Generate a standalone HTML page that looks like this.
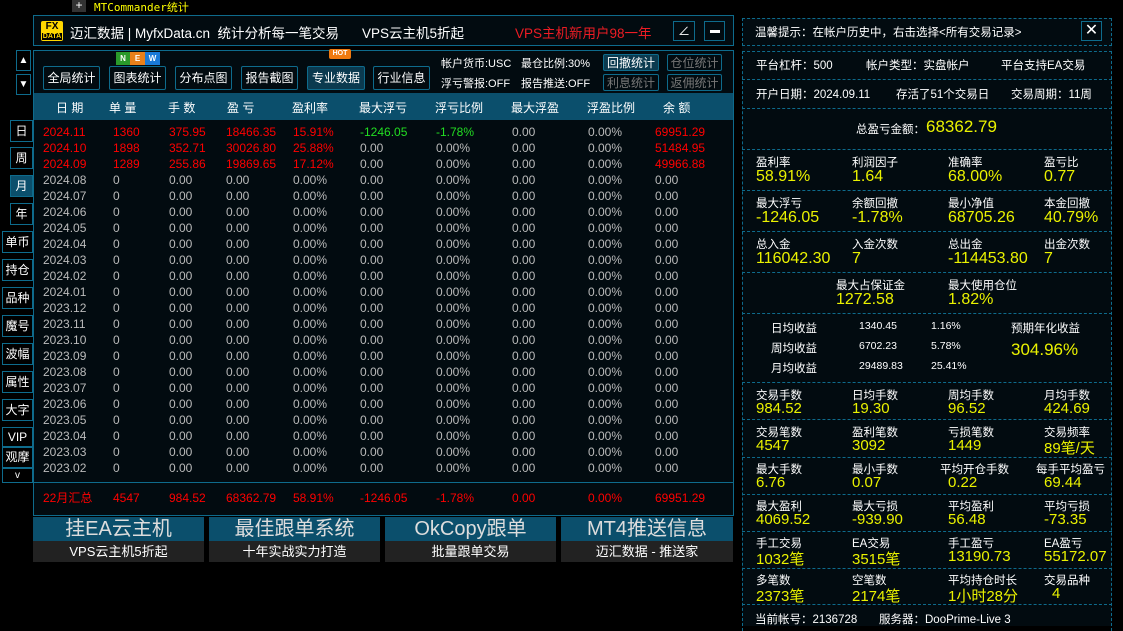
<!DOCTYPE html>
<html><head><meta charset="utf-8"><style>
*{margin:0;padding:0;box-sizing:border-box}
body{width:1123px;height:626px;background:#000;position:relative;overflow:hidden;font-family:"Liberation Sans","Noto Sans CJK SC",sans-serif;color:#ddd;font-size:12px}
.a{position:absolute;white-space:nowrap}
.bx{position:absolute;border:1px solid #0e6b8c}
.btn{position:absolute;border:1px solid #0e6b8c;border-radius:2px;background:#020b10;color:#fff;font-size:12px;text-align:center;line-height:23px}
.sb{position:absolute;border:1px solid #0e6b8c;border-radius:2px;color:#777;font-size:12px;text-align:center;line-height:16px}
.side{position:absolute;border:1px solid #0e6b8c;background:#000;color:#fff;font-size:12px;text-align:center}
table{position:absolute;left:43px;border-collapse:collapse;font-size:12px}
td{height:16px;padding:0;line-height:16px;white-space:nowrap;color:#bbb}
tr.r td{color:#f00}
.rp{position:absolute;left:742px;width:370px;border:1px dashed #0e6b8c;border-top:none;border-bottom:none}
.hl{position:absolute;left:742px;width:370px;border-top:1px dashed #0e6b8c}
.y{color:#eaf200;font-size:16px}
.w{color:#fff;font-size:11.5px}
</style></head><body>
<div class="a" style="left:72px;top:0;width:14px;height:12px;background:#333;color:#fff;text-align:center;line-height:11px;font-size:12px">+</div>
<div class="a" style="left:94px;top:-1px;color:#ff0;font-size:11px;font-family:'DejaVu Sans Mono','Noto Sans CJK SC',monospace">MTCommander统计</div>

<!-- header -->
<div class="bx" style="left:33px;top:15px;width:701px;height:31px;background:#020b10"></div>
<div class="a" style="left:41px;top:21px;width:22px;height:20px;background:#ffd800;border-radius:2px;color:#000;font-weight:bold;text-align:center;line-height:9px;font-size:10px;padding-top:1px">FX<br><span style="font-size:7px;background:#000;color:#ffd800;padding:0 1px">DATA</span></div>
<div class="a" style="left:70px;top:22px;color:#fff;font-size:13.5px">迈汇数据 | MyfxData.cn&nbsp; 统计分析每一笔交易</div>
<div class="a" style="left:362px;top:22px;color:#fff;font-size:13.5px">VPS云主机5折起</div>
<div class="a" style="left:515px;top:22px;color:#ee1c24;font-size:13.5px">VPS主机新用户98一年</div>
<div class="bx" style="left:673px;top:21px;width:22px;height:20px;color:#fff;text-align:center;line-height:18px;font-size:12px">∠</div>
<div class="bx" style="left:704px;top:21px;width:21px;height:20px"><div class="a" style="left:5px;top:8px;width:10px;height:3px;background:#fff"></div></div>

<!-- arrows -->
<div class="side" style="left:16px;top:50px;width:15px;height:21px;line-height:19px;font-size:10px">▲</div>
<div class="side" style="left:16px;top:74px;width:15px;height:21px;line-height:19px;font-size:10px">▼</div>

<!-- main panel -->
<div class="bx" style="left:33px;top:50px;width:701px;height:466px;background:#020b10"></div>
<div class="a" style="left:34px;top:93px;width:699px;height:27px;background:#0b4f6c"></div>
<div class="a" style="left:34px;top:482px;width:699px;border-top:1px solid #0e6b8c"></div>

<div class="btn" style="left:43px;top:66px;width:57px;height:24px">全局统计</div>
<div class="btn" style="left:109px;top:66px;width:57px;height:24px">图表统计</div>
<div class="btn" style="left:175px;top:66px;width:57px;height:24px">分布点图</div>
<div class="btn" style="left:241px;top:66px;width:57px;height:24px">报告截图</div>
<div class="btn" style="left:307px;top:66px;width:58px;height:24px;background:#0b3a4f">专业数据</div>
<div class="btn" style="left:373px;top:66px;width:57px;height:24px">行业信息</div>
<div class="a" style="left:116px;top:52px;width:14px;height:13px;background:#2a9a2a;color:#fff;font-size:8px;font-weight:bold;text-align:center;line-height:13px">N</div>
<div class="a" style="left:130px;top:52px;width:15px;height:13px;background:#e8801a;color:#fff;font-size:8px;font-weight:bold;text-align:center;line-height:13px">E</div>
<div class="a" style="left:145px;top:52px;width:15px;height:13px;background:#1a7ad8;color:#fff;font-size:8px;font-weight:bold;text-align:center;line-height:13px">W</div>
<div class="a" style="left:329px;top:49px;width:22px;height:10px;background:#f07a10;color:#fff;font-size:7px;font-weight:bold;text-align:center;line-height:10px;border-radius:2px">HOT</div>

<div class="a" style="left:441px;top:55px;color:#fff;font-size:11px">帐户货币:USC</div>
<div class="a" style="left:521px;top:55px;color:#fff;font-size:11px">最仓比例:30%</div>
<div class="a" style="left:441px;top:75px;color:#fff;font-size:11px">浮亏警报:OFF</div>
<div class="a" style="left:521px;top:75px;color:#fff;font-size:11px">报告推送:OFF</div>
<div class="sb" style="left:603px;top:54px;width:56px;height:17px;color:#fff;background:#0b3a4f">回撤统计</div>
<div class="sb" style="left:667px;top:54px;width:55px;height:17px">仓位统计</div>
<div class="sb" style="left:603px;top:74px;width:56px;height:17px">利息统计</div>
<div class="sb" style="left:667px;top:74px;width:55px;height:17px">返佣统计</div>

<div class="a" style="left:56px;top:99px;color:#fff;font-size:12px">日 期</div>
<div class="a" style="left:109px;top:99px;color:#fff">单 量</div>
<div class="a" style="left:168px;top:99px;color:#fff">手 数</div>
<div class="a" style="left:227px;top:99px;color:#fff">盈 亏</div>
<div class="a" style="left:292px;top:99px;color:#fff">盈利率</div>
<div class="a" style="left:359px;top:99px;color:#fff">最大浮亏</div>
<div class="a" style="left:435px;top:99px;color:#fff">浮亏比例</div>
<div class="a" style="left:511px;top:99px;color:#fff">最大浮盈</div>
<div class="a" style="left:587px;top:99px;color:#fff">浮盈比例</div>
<div class="a" style="left:663px;top:99px;color:#fff">余 额</div>

<table style="top:124px">
<colgroup><col style="width:70px"><col style="width:56px"><col style="width:57px"><col style="width:67px"><col style="width:67px"><col style="width:76px"><col style="width:76px"><col style="width:76px"><col style="width:67px"><col style="width:78px"></colgroup>
<tr class="r"><td>2024.11</td><td>1360</td><td>375.95</td><td>18466.35</td><td>15.91%</td><td style="color:#2d2">-1246.05</td><td style="color:#2d2">-1.78%</td><td style="color:#bbb">0.00</td><td style="color:#bbb">0.00%</td><td>69951.29</td></tr>
<tr class="r"><td>2024.10</td><td>1898</td><td>352.71</td><td>30026.80</td><td>25.88%</td><td style="color:#bbb">0.00</td><td style="color:#bbb">0.00%</td><td style="color:#bbb">0.00</td><td style="color:#bbb">0.00%</td><td>51484.95</td></tr>
<tr class="r"><td>2024.09</td><td>1289</td><td>255.86</td><td>19869.65</td><td>17.12%</td><td style="color:#bbb">0.00</td><td style="color:#bbb">0.00%</td><td style="color:#bbb">0.00</td><td style="color:#bbb">0.00%</td><td>49966.88</td></tr>
<tr><td>2024.08</td><td>0</td><td>0.00</td><td>0.00</td><td>0.00%</td><td>0.00</td><td>0.00%</td><td>0.00</td><td>0.00%</td><td>0.00</td></tr>
<tr><td>2024.07</td><td>0</td><td>0.00</td><td>0.00</td><td>0.00%</td><td>0.00</td><td>0.00%</td><td>0.00</td><td>0.00%</td><td>0.00</td></tr>
<tr><td>2024.06</td><td>0</td><td>0.00</td><td>0.00</td><td>0.00%</td><td>0.00</td><td>0.00%</td><td>0.00</td><td>0.00%</td><td>0.00</td></tr>
<tr><td>2024.05</td><td>0</td><td>0.00</td><td>0.00</td><td>0.00%</td><td>0.00</td><td>0.00%</td><td>0.00</td><td>0.00%</td><td>0.00</td></tr>
<tr><td>2024.04</td><td>0</td><td>0.00</td><td>0.00</td><td>0.00%</td><td>0.00</td><td>0.00%</td><td>0.00</td><td>0.00%</td><td>0.00</td></tr>
<tr><td>2024.03</td><td>0</td><td>0.00</td><td>0.00</td><td>0.00%</td><td>0.00</td><td>0.00%</td><td>0.00</td><td>0.00%</td><td>0.00</td></tr>
<tr><td>2024.02</td><td>0</td><td>0.00</td><td>0.00</td><td>0.00%</td><td>0.00</td><td>0.00%</td><td>0.00</td><td>0.00%</td><td>0.00</td></tr>
<tr><td>2024.01</td><td>0</td><td>0.00</td><td>0.00</td><td>0.00%</td><td>0.00</td><td>0.00%</td><td>0.00</td><td>0.00%</td><td>0.00</td></tr>
<tr><td>2023.12</td><td>0</td><td>0.00</td><td>0.00</td><td>0.00%</td><td>0.00</td><td>0.00%</td><td>0.00</td><td>0.00%</td><td>0.00</td></tr>
<tr><td>2023.11</td><td>0</td><td>0.00</td><td>0.00</td><td>0.00%</td><td>0.00</td><td>0.00%</td><td>0.00</td><td>0.00%</td><td>0.00</td></tr>
<tr><td>2023.10</td><td>0</td><td>0.00</td><td>0.00</td><td>0.00%</td><td>0.00</td><td>0.00%</td><td>0.00</td><td>0.00%</td><td>0.00</td></tr>
<tr><td>2023.09</td><td>0</td><td>0.00</td><td>0.00</td><td>0.00%</td><td>0.00</td><td>0.00%</td><td>0.00</td><td>0.00%</td><td>0.00</td></tr>
<tr><td>2023.08</td><td>0</td><td>0.00</td><td>0.00</td><td>0.00%</td><td>0.00</td><td>0.00%</td><td>0.00</td><td>0.00%</td><td>0.00</td></tr>
<tr><td>2023.07</td><td>0</td><td>0.00</td><td>0.00</td><td>0.00%</td><td>0.00</td><td>0.00%</td><td>0.00</td><td>0.00%</td><td>0.00</td></tr>
<tr><td>2023.06</td><td>0</td><td>0.00</td><td>0.00</td><td>0.00%</td><td>0.00</td><td>0.00%</td><td>0.00</td><td>0.00%</td><td>0.00</td></tr>
<tr><td>2023.05</td><td>0</td><td>0.00</td><td>0.00</td><td>0.00%</td><td>0.00</td><td>0.00%</td><td>0.00</td><td>0.00%</td><td>0.00</td></tr>
<tr><td>2023.04</td><td>0</td><td>0.00</td><td>0.00</td><td>0.00%</td><td>0.00</td><td>0.00%</td><td>0.00</td><td>0.00%</td><td>0.00</td></tr>
<tr><td>2023.03</td><td>0</td><td>0.00</td><td>0.00</td><td>0.00%</td><td>0.00</td><td>0.00%</td><td>0.00</td><td>0.00%</td><td>0.00</td></tr>
<tr><td>2023.02</td><td>0</td><td>0.00</td><td>0.00</td><td>0.00%</td><td>0.00</td><td>0.00%</td><td>0.00</td><td>0.00%</td><td>0.00</td></tr>
</table>
<table style="top:490px">
<colgroup><col style="width:70px"><col style="width:56px"><col style="width:57px"><col style="width:67px"><col style="width:67px"><col style="width:76px"><col style="width:76px"><col style="width:76px"><col style="width:67px"><col style="width:78px"></colgroup>
<tr class="r"><td>22月汇总</td><td>4547</td><td>984.52</td><td>68362.79</td><td>58.91%</td><td>-1246.05</td><td>-1.78%</td><td>0.00</td><td>0.00%</td><td>69951.29</td></tr>
</table>

<!-- side buttons -->
<div class="side" style="left:10px;top:120px;width:23px;height:22px;line-height:20px">日</div>
<div class="side" style="left:10px;top:147px;width:23px;height:22px;line-height:20px">周</div>
<div class="side" style="left:10px;top:175px;width:23px;height:22px;line-height:20px;background:#0b4f6c">月</div>
<div class="side" style="left:10px;top:203px;width:23px;height:22px;line-height:20px">年</div>
<div class="side" style="left:2px;top:231px;width:31px;height:22px;line-height:20px">单币</div>
<div class="side" style="left:2px;top:259px;width:31px;height:22px;line-height:20px">持仓</div>
<div class="side" style="left:2px;top:287px;width:31px;height:22px;line-height:20px">品种</div>
<div class="side" style="left:2px;top:315px;width:31px;height:22px;line-height:20px">魔号</div>
<div class="side" style="left:2px;top:343px;width:31px;height:22px;line-height:20px">波幅</div>
<div class="side" style="left:2px;top:371px;width:31px;height:22px;line-height:20px">属性</div>
<div class="side" style="left:2px;top:399px;width:31px;height:22px;line-height:20px">大字</div>
<div class="side" style="left:2px;top:427px;width:31px;height:20px;line-height:18px">VIP</div>
<div class="side" style="left:2px;top:447px;width:31px;height:21px;line-height:19px">观摩</div>
<div class="side" style="left:2px;top:468px;width:31px;height:15px;line-height:13px;font-size:10px">v</div>

<!-- banners -->
<div class="a" style="left:33px;top:517px;width:171px;height:24px;background:#0b4f6c;color:#ddd;font-size:20px;text-align:center;line-height:24px">挂EA云主机</div>
<div class="a" style="left:209px;top:517px;width:171px;height:24px;background:#0b4f6c;color:#ddd;font-size:20px;text-align:center;line-height:24px">最佳跟单系统</div>
<div class="a" style="left:385px;top:517px;width:171px;height:24px;background:#0b4f6c;color:#ddd;font-size:20px;text-align:center;line-height:24px">OkCopy跟单</div>
<div class="a" style="left:561px;top:517px;width:172px;height:24px;background:#0b4f6c;color:#ddd;font-size:20px;text-align:center;line-height:24px">MT4推送信息</div>
<div class="a" style="left:33px;top:541px;width:171px;height:21px;background:#222;color:#fff;font-size:13px;text-align:center;line-height:21px">VPS云主机5折起</div>
<div class="a" style="left:209px;top:541px;width:171px;height:21px;background:#222;color:#fff;font-size:13px;text-align:center;line-height:21px">十年实战实力打造</div>
<div class="a" style="left:385px;top:541px;width:171px;height:21px;background:#222;color:#fff;font-size:13px;text-align:center;line-height:21px">批量跟单交易</div>
<div class="a" style="left:561px;top:541px;width:172px;height:21px;background:#222;color:#fff;font-size:13px;text-align:center;line-height:21px">迈汇数据 - 推送家</div>

<!-- right panel -->
<div class="a" style="left:742px;top:18px;width:370px;height:608px;background:#020b10"></div>
<div class="rp" style="top:18px;height:28px"></div>
<div class="rp" style="top:51px;height:580px"></div>
<div class="hl" style="top:18px"></div><div class="hl" style="top:45px"></div>
<div class="hl" style="top:51px"></div><div class="hl" style="top:79px"></div><div class="hl" style="top:108px"></div><div class="hl" style="top:149px"></div><div class="hl" style="top:190px"></div><div class="hl" style="top:231px"></div><div class="hl" style="top:272px"></div><div class="hl" style="top:313px"></div><div class="hl" style="top:382px"></div><div class="hl" style="top:419px"></div><div class="hl" style="top:457px"></div><div class="hl" style="top:494px"></div><div class="hl" style="top:531px"></div><div class="hl" style="top:568px"></div><div class="hl" style="top:604px"></div>

<div class="a w" style="left:755px;top:24px">温馨提示：在帐户历史中，右击选择&lt;所有交易记录&gt;</div>
<div class="bx" style="left:1081px;top:21px;width:21px;height:20px;color:#fff;text-align:center;line-height:18px;font-size:16px">✕</div>
<div class="a w" style="left:756px;top:57px">平台杠杆：500</div>
<div class="a w" style="left:866px;top:57px">帐户类型：实盘帐户</div>
<div class="a w" style="left:1001px;top:57px">平台支持EA交易</div>
<div class="a w" style="left:756px;top:86px">开户日期：2024.09.11</div>
<div class="a w" style="left:896px;top:86px">存活了51个交易日</div>
<div class="a w" style="left:1011px;top:86px">交易周期：11周</div>
<div class="a w" style="left:856px;top:121px">总盈亏金额：</div>
<div class="a y" style="left:926px;top:117px;font-size:17px">68362.79</div>

<div class="a w" style="left:756px;top:154px">盈利率</div><div class="a y" style="left:756px;top:168px">58.91%</div>
<div class="a w" style="left:852px;top:154px">利润因子</div><div class="a y" style="left:852px;top:168px">1.64</div>
<div class="a w" style="left:948px;top:154px">准确率</div><div class="a y" style="left:948px;top:168px">68.00%</div>
<div class="a w" style="left:1044px;top:154px">盈亏比</div><div class="a y" style="left:1044px;top:168px">0.77</div>

<div class="a w" style="left:756px;top:195px">最大浮亏</div><div class="a y" style="left:756px;top:209px">-1246.05</div>
<div class="a w" style="left:852px;top:195px">余额回撤</div><div class="a y" style="left:852px;top:209px">-1.78%</div>
<div class="a w" style="left:948px;top:195px">最小净值</div><div class="a y" style="left:948px;top:209px">68705.26</div>
<div class="a w" style="left:1044px;top:195px">本金回撤</div><div class="a y" style="left:1044px;top:209px">40.79%</div>

<div class="a w" style="left:756px;top:236px">总入金</div><div class="a y" style="left:756px;top:250px">116042.30</div>
<div class="a w" style="left:852px;top:236px">入金次数</div><div class="a y" style="left:852px;top:250px">7</div>
<div class="a w" style="left:948px;top:236px">总出金</div><div class="a y" style="left:948px;top:250px">-114453.80</div>
<div class="a w" style="left:1044px;top:236px">出金次数</div><div class="a y" style="left:1044px;top:250px">7</div>

<div class="a w" style="left:836px;top:277px">最大占保证金</div><div class="a y" style="left:836px;top:291px">1272.58</div>
<div class="a w" style="left:948px;top:277px">最大使用仓位</div><div class="a y" style="left:948px;top:291px">1.82%</div>

<div class="a w" style="left:771px;top:320px">日均收益</div><div class="a w" style="left:859px;top:320px;font-size:10.5px">1340.45</div><div class="a w" style="left:931px;top:320px;font-size:10.5px">1.16%</div>
<div class="a w" style="left:771px;top:340px">周均收益</div><div class="a w" style="left:859px;top:340px;font-size:10.5px">6702.23</div><div class="a w" style="left:931px;top:340px;font-size:10.5px">5.78%</div>
<div class="a w" style="left:771px;top:360px">月均收益</div><div class="a w" style="left:859px;top:360px;font-size:10.5px">29489.83</div><div class="a w" style="left:931px;top:360px;font-size:10.5px">25.41%</div>
<div class="a w" style="left:1011px;top:320px">预期年化收益</div><div class="a y" style="left:1011px;top:340px;font-size:17px">304.96%</div>

<div class="a w" style="left:756px;top:387px">交易手数</div><div class="a y" style="left:756px;top:400px;font-size:15px">984.52</div>
<div class="a w" style="left:852px;top:387px">日均手数</div><div class="a y" style="left:852px;top:400px;font-size:15px">19.30</div>
<div class="a w" style="left:948px;top:387px">周均手数</div><div class="a y" style="left:948px;top:400px;font-size:15px">96.52</div>
<div class="a w" style="left:1044px;top:387px">月均手数</div><div class="a y" style="left:1044px;top:400px;font-size:15px">424.69</div>

<div class="a w" style="left:756px;top:424px">交易笔数</div><div class="a y" style="left:756px;top:437px;font-size:15px">4547</div>
<div class="a w" style="left:852px;top:424px">盈利笔数</div><div class="a y" style="left:852px;top:437px;font-size:15px">3092</div>
<div class="a w" style="left:948px;top:424px">亏损笔数</div><div class="a y" style="left:948px;top:437px;font-size:15px">1449</div>
<div class="a w" style="left:1044px;top:424px">交易频率</div><div class="a y" style="left:1044px;top:437px;font-size:15px">89笔/天</div>

<div class="a w" style="left:756px;top:461px">最大手数</div><div class="a y" style="left:756px;top:474px;font-size:15px">6.76</div>
<div class="a w" style="left:852px;top:461px">最小手数</div><div class="a y" style="left:852px;top:474px;font-size:15px">0.07</div>
<div class="a w" style="left:940px;top:461px">平均开仓手数</div><div class="a y" style="left:948px;top:474px;font-size:15px">0.22</div>
<div class="a w" style="left:1036px;top:461px">每手平均盈亏</div><div class="a y" style="left:1044px;top:474px;font-size:15px">69.44</div>

<div class="a w" style="left:756px;top:498px">最大盈利</div><div class="a y" style="left:756px;top:511px;font-size:15px">4069.52</div>
<div class="a w" style="left:852px;top:498px">最大亏损</div><div class="a y" style="left:852px;top:511px;font-size:15px">-939.90</div>
<div class="a w" style="left:948px;top:498px">平均盈利</div><div class="a y" style="left:948px;top:511px;font-size:15px">56.48</div>
<div class="a w" style="left:1044px;top:498px">平均亏损</div><div class="a y" style="left:1044px;top:511px;font-size:15px">-73.35</div>

<div class="a w" style="left:756px;top:535px">手工交易</div><div class="a y" style="left:756px;top:548px;font-size:15px">1032笔</div>
<div class="a w" style="left:852px;top:535px">EA交易</div><div class="a y" style="left:852px;top:548px;font-size:15px">3515笔</div>
<div class="a w" style="left:948px;top:535px">手工盈亏</div><div class="a y" style="left:948px;top:548px;font-size:15px">13190.73</div>
<div class="a w" style="left:1044px;top:535px">EA盈亏</div><div class="a y" style="left:1044px;top:548px;font-size:15px">55172.07</div>

<div class="a w" style="left:756px;top:572px">多笔数</div><div class="a y" style="left:756px;top:585px;font-size:15px">2373笔</div>
<div class="a w" style="left:852px;top:572px">空笔数</div><div class="a y" style="left:852px;top:585px;font-size:15px">2174笔</div>
<div class="a w" style="left:948px;top:572px">平均持仓时长</div><div class="a y" style="left:948px;top:585px;font-size:15px">1小时28分</div>
<div class="a w" style="left:1044px;top:572px">交易品种</div><div class="a y" style="left:1052px;top:585px;font-size:15px">4</div>

<div class="a w" style="left:755px;top:611px">当前帐号：2136728</div>
<div class="a w" style="left:879px;top:611px">服务器：DooPrime-Live 3</div>
</body></html>
